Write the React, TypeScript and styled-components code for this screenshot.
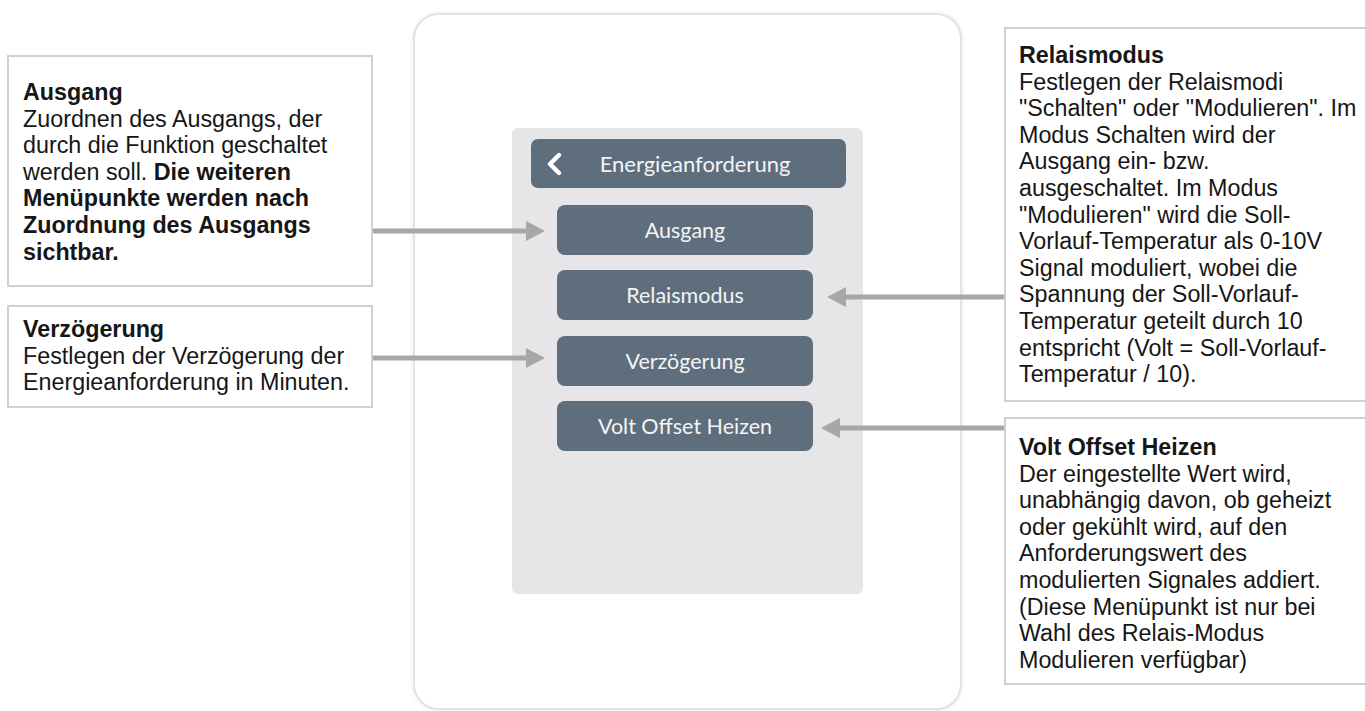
import React from "react";
import styled, { createGlobalStyle } from "styled-components";

const GlobalStyle = createGlobalStyle`
  html, body {
    margin: 0;
    padding: 0;
    background: #ffffff;
    overflow: hidden;
  }
  * { box-sizing: border-box; }
`;

const Page = styled.div`
  position: relative;
  display: flex;
  align-items: flex-start;
  width: 1365px;
  height: 711px;
  overflow: hidden;
  background: #ffffff;
  font-family: "Liberation Sans", Arial, sans-serif;
`;

const SideColumn = styled.div<{ $padTop: number; $gap: number; $marginLeft: number; $width: number }>`
  display: flex;
  flex-direction: column;
  flex-shrink: 0;
  width: ${(p) => p.$width}px;
  margin-left: ${(p) => p.$marginLeft}px;
  padding-top: ${(p) => p.$padTop}px;
  gap: ${(p) => p.$gap}px;
`;

const InfoBox = styled.div<{ $height: number; $padTop: number; $padLeft: number }>`
  height: ${(p) => p.$height}px;
  padding: ${(p) => p.$padTop}px 8px 0 ${(p) => p.$padLeft}px;
  border: 2px solid #d0d0d0;
  background: #ffffff;
  color: #161616;
  font-size: 23.3px;
  line-height: 26.6px;
  white-space: nowrap;
`;

const Title = styled.div`
  font-weight: 700;
`;

const Bold = styled.span`
  font-weight: 700;
`;

const Device = styled.div`
  flex-shrink: 0;
  display: flex;
  justify-content: center;
  width: 549px;
  height: 697px;
  margin-left: 40px;
  margin-top: 13px;
  padding-top: 113px;
  border: 2px solid #e3e3e3;
  border-radius: 26px;
  background: #ffffff;
  box-shadow: 0 0 4px rgba(0, 0, 0, 0.1);
`;

const Panel = styled.div`
  display: flex;
  flex-direction: column;
  width: 351px;
  height: 466px;
  padding: 11px 17px 0 19px;
  border-radius: 6px;
  background: #e6e6e8;
`;

const Header = styled.div`
  display: grid;
  grid-template-columns: 18px 1fr;
  align-items: center;
  height: 49px;
  padding: 0 19px 0 14px;
  border-radius: 7px;
  background: #5e6e7d;
  color: #f4f4f4;
  font-family: Lato, "Open Sans", sans-serif;
  font-size: 22px;
`;

const HeaderTitle = styled.span`
  text-align: center;
`;

const MenuList = styled.div`
  display: flex;
  flex-direction: column;
  gap: 15.3px;
  width: 256px;
  margin: 17px 0 0 26px;
`;

const MenuButton = styled.div`
  display: flex;
  align-items: center;
  justify-content: center;
  height: 50px;
  border-radius: 8px;
  background: #5e6e7d;
  color: #f4f4f4;
  font-family: Lato, "Open Sans", sans-serif;
  font-size: 21.5px;
`;

const ArrowSvg = styled.svg<{ $left: number; $top: number }>`
  position: absolute;
  left: ${(p) => p.$left}px;
  top: ${(p) => p.$top}px;
  overflow: visible;
`;

const Chevron = () => (
  <svg width="18" height="24" viewBox="0 0 18 24">
    <path d="M14 3 L5 12 L14 21" fill="none" stroke="#ffffff" strokeWidth="4.4" strokeLinecap="round" strokeLinejoin="round" />
  </svg>
);

type ArrowProps = { from: number; to: number; y: number };

const Arrow = ({ from, to, y }: ArrowProps) => {
  const left = Math.min(from, to);
  const len = Math.abs(to - from);
  const right = to > from;
  const head = 19;
  const h = 20;
  const cy = h / 2;
  const line = right ? `M0 ${cy} L${len - head + 1} ${cy}` : `M${head - 1} ${cy} L${len} ${cy}`;
  const poly = right
    ? `${len - head},0 ${len},${cy} ${len - head},${h}`
    : `${head},0 0,${cy} ${head},${h}`;
  return (
    <ArrowSvg $left={left} $top={y - cy} width={len} height={h} viewBox={`0 0 ${len} ${h}`}>
      <path d={line} stroke="#a7a7a7" strokeWidth="5" fill="none" />
      <polygon points={poly} fill="#a7a7a7" />
    </ArrowSvg>
  );
};

const Lines = ({ lines }: { lines: React.ReactNode[] }) => (
  <>
    {lines.map((l, i) => (
      <div key={i}>{l}</div>
    ))}
  </>
);

export default function App() {
  return (
    <>
      <GlobalStyle />
      <Page>
        <SideColumn $padTop={55} $gap={18} $marginLeft={7} $width={366}>
          <InfoBox $height={232} $padTop={22} $padLeft={14}>
            <Title>Ausgang</Title>
            <Lines
              lines={[
                "Zuordnen des Ausgangs, der",
                "durch die Funktion geschaltet",
                <>
                  werden soll. <Bold>Die weiteren</Bold>
                </>,
                <Bold>Menüpunkte werden nach</Bold>,
                <Bold>Zuordnung des Ausgangs</Bold>,
                <Bold>sichtbar.</Bold>,
              ]}
            />
          </InfoBox>
          <InfoBox $height={103} $padTop={9} $padLeft={14}>
            <Title>Verzögerung</Title>
            <Lines lines={["Festlegen der Verzögerung der", "Energieanforderung in Minuten."]} />
          </InfoBox>
        </SideColumn>

        <Device>
          <Panel>
            <Header>
              <Chevron />
              <HeaderTitle>Energieanforderung</HeaderTitle>
            </Header>
            <MenuList>
              <MenuButton>Ausgang</MenuButton>
              <MenuButton>Relaismodus</MenuButton>
              <MenuButton>Verzögerung</MenuButton>
              <MenuButton>Volt Offset Heizen</MenuButton>
            </MenuList>
          </Panel>
        </Device>

        <SideColumn $padTop={27} $gap={15} $marginLeft={42} $width={420}>
          <InfoBox $height={375} $padTop={13} $padLeft={13}>
            <Title>Relaismodus</Title>
            <Lines
              lines={[
                "Festlegen der Relaismodi",
                "\"Schalten\" oder \"Modulieren\". Im",
                "Modus Schalten wird der",
                "Ausgang ein- bzw.",
                "ausgeschaltet. Im Modus",
                "\"Modulieren\" wird die Soll-",
                "Vorlauf-Temperatur als 0-10V",
                "Signal moduliert, wobei die",
                "Spannung der Soll-Vorlauf-",
                "Temperatur geteilt durch 10",
                "entspricht (Volt = Soll-Vorlauf-",
                "Temperatur / 10).",
              ]}
            />
          </InfoBox>
          <InfoBox $height={268} $padTop={15} $padLeft={13}>
            <Title>Volt Offset Heizen</Title>
            <Lines
              lines={[
                "Der eingestellte Wert wird,",
                "unabhängig davon, ob geheizt",
                "oder gekühlt wird, auf den",
                "Anforderungswert des",
                "modulierten Signales addiert.",
                "(Diese Menüpunkt ist nur bei",
                "Wahl des Relais-Modus",
                "Modulieren verfügbar)",
              ]}
            />
          </InfoBox>
        </SideColumn>

        <Arrow from={373} to={545} y={231} />
        <Arrow from={373} to={545} y={358} />
        <Arrow from={1004} to={827} y={297} />
        <Arrow from={1004} to={821} y={428} />
      </Page>
    </>
  );
}
